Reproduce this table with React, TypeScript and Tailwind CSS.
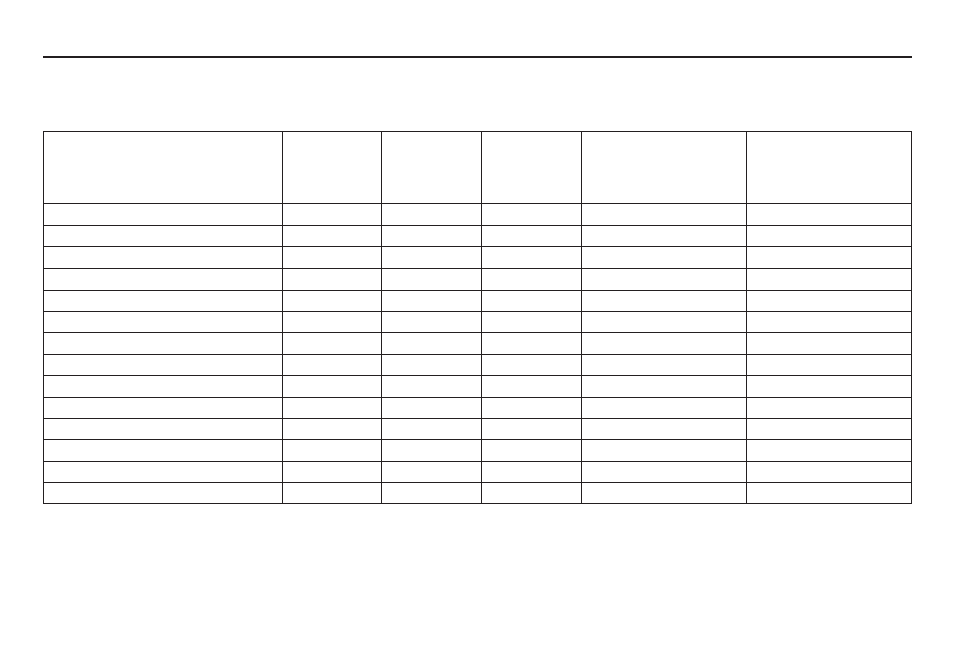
import React from "react";

const rowHeights = [72, 22, 21, 22, 22, 21, 21, 22, 21, 22, 21, 21, 22, 21, 21];

export default function App() {
  return (
    <div className="min-h-[652px] w-[954px] bg-white pt-[56px] pl-[43px] font-['Liberation_Sans',sans-serif]">
      <div className="h-[2px] w-[869px] bg-[#231f20]" />
      <div className="mt-[73px] grid w-[869px] grid-cols-[239px_99px_100px_100px_165px_165px] border-l border-t border-[#231f20]">
        {rowHeights.map((h, r) =>
          [0, 1, 2, 3, 4, 5].map((c) => (
            <div
              key={`${r}-${c}`}
              className="border-b border-r border-[#231f20]"
              style={{ height: h }}
            />
          ))
        )}
      </div>
    </div>
  );
}
